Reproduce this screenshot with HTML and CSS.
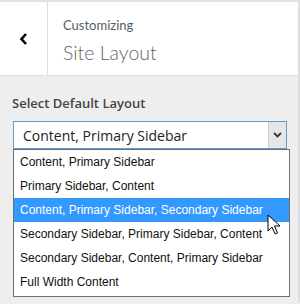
FILE: index.html
```html
<!DOCTYPE html>
<html lang="en">
<head>
<meta charset="utf-8">
<title>Customizing – Site Layout</title>
<link rel="stylesheet" href="styles.css">
</head>
<body>
<div class="panel">
  <div class="head">
    <div class="back">
      <svg width="10" height="14" viewBox="0 0 10 14"><path d="M7 2 L2.5 7 L7 12" fill="none" stroke="#000" stroke-width="2.6"/></svg>
    </div>
    <div class="title">
      <span class="small">Customizing</span>
      <span class="big">Site Layout</span>
    </div>
  </div>

  <div class="body">
    <div class="label">Select Default Layout</div>
    <div class="select">
      <span>Content, Primary Sidebar</span>
      <span class="arrow"><svg width="9" height="6" viewBox="0 0 9 6"><path d="M1 1 L4.5 4.5 L8 1" fill="none" stroke="#333" stroke-width="1.8"/></svg></span>
    </div>
    <ul class="list">
      <li>Content, Primary Sidebar</li>
      <li>Primary Sidebar, Content</li>
      <li class="sel">Content, Primary Sidebar, Secondary Sidebar</li>
      <li>Secondary Sidebar, Primary Sidebar, Content</li>
      <li>Secondary Sidebar, Content, Primary Sidebar</li>
      <li>Full Width Content</li>
    </ul>
  </div>

  <svg class="cursor" width="14" height="22" viewBox="0 0 14 22"><path d="M1 1 L1 17 L5 13 L8 20 L10.5 19 L7.5 12 L13 12 Z" fill="#fff" stroke="#000" stroke-width="1"/></svg>
</div>
</body>
</html>
```

FILE: styles.css
```css
html,body{margin:0;padding:0;}
body{width:300px;height:304px;overflow:hidden;background:#eee;font-family:"Open Sans","Noto Sans",sans-serif;}
.panel{position:relative;height:302px;border-top:2px solid #e2e2e2;border-right:2px solid #ddd;box-sizing:border-box;width:300px;}
.head{display:flex;height:73px;background:#fff;border-bottom:1px solid #ddd;}
.back{width:47px;border-right:1px solid #ddd;display:flex;align-items:center;justify-content:center;}
.title{display:flex;flex-direction:column;padding:13px 0 0 15px;color:#555d66;font-family:Lato,"Open Sans",sans-serif;}
.small{font-size:13px;line-height:20px;}
.big{font-size:19.5px;line-height:30px;margin-top:3px;color:#666;font-weight:300;}
.body{padding:18px 10px 0 13px;}
.label{font-size:13px;font-weight:600;color:#444;margin-left:-1px;line-height:18px;}
.select{margin-top:9px;width:274px;height:28px;box-sizing:border-box;border:1px solid #5b9dd9;background:#fff;display:flex;align-items:center;justify-content:space-between;padding-left:9px;font-size:14px;color:#222;}
.arrow{width:17px;height:26px;background:#e6e6e6;border-left:1px solid #ccc;display:flex;align-items:center;justify-content:center;}
.list{list-style:none;margin:0;padding:0 0 2px;width:277px;box-sizing:border-box;border:1px solid #707070;background:#fff;font-family:"Liberation Sans",Arial,sans-serif;font-size:12px;color:#111;}
.list li{height:24px;line-height:24px;padding-left:6px;white-space:nowrap;}
.list li.sel{background:#3399ff;color:#fff;}
.cursor{position:absolute;left:267px;top:212px;}
```
